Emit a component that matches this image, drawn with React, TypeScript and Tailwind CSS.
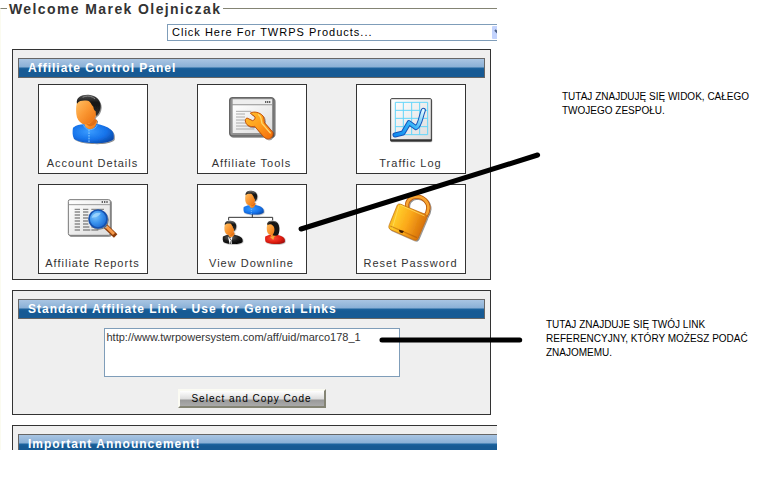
import React, { useState } from "react";

const Gradients = () => (
  <svg className="absolute h-0 w-0" aria-hidden="true">
    <defs>
      <linearGradient id="skin" x1="0" y1="0" x2="1" y2="1">
        <stop offset="0" stopColor="#ffc46a" />
        <stop offset="0.45" stopColor="#fb9a35" />
        <stop offset="1" stopColor="#e8690a" />
      </linearGradient>
      <linearGradient id="hair" x1="0" y1="0" x2="0" y2="1">
        <stop offset="0" stopColor="#555" />
        <stop offset="0.4" stopColor="#111" />
        <stop offset="1" stopColor="#333" />
      </linearGradient>
      <radialGradient id="shirtBlue" cx="0.4" cy="0.4" r="0.7">
        <stop offset="0" stopColor="#3a9cff" />
        <stop offset="0.6" stopColor="#1673ea" />
        <stop offset="1" stopColor="#0a48a8" />
      </radialGradient>
      <radialGradient id="shirtBlack" cx="0.4" cy="0.3" r="0.8">
        <stop offset="0" stopColor="#666" />
        <stop offset="0.5" stopColor="#1c1c1c" />
        <stop offset="1" stopColor="#000" />
      </radialGradient>
      <radialGradient id="shirtRed" cx="0.4" cy="0.4" r="0.7">
        <stop offset="0" stopColor="#ff4b35" />
        <stop offset="0.6" stopColor="#e01d12" />
        <stop offset="1" stopColor="#9c0d08" />
      </radialGradient>
      <linearGradient id="paper" x1="0" y1="0" x2="1" y2="1">
        <stop offset="0" stopColor="#fff" />
        <stop offset="1" stopColor="#dcdcdc" />
      </linearGradient>
      <linearGradient id="wrench" x1="0" y1="0" x2="1" y2="1">
        <stop offset="0" stopColor="#ffc02e" />
        <stop offset="0.5" stopColor="#ff9d1c" />
        <stop offset="1" stopColor="#f26a0c" />
      </linearGradient>
      <linearGradient id="chart" x1="0" y1="1" x2="1" y2="0">
        <stop offset="0" stopColor="#0f8cf0" />
        <stop offset="0.5" stopColor="#35b4f8" />
        <stop offset="1" stopColor="#e4fbff" />
      </linearGradient>
      <radialGradient id="lens" cx="0.35" cy="0.35" r="0.75">
        <stop offset="0" stopColor="#7cc4fb" />
        <stop offset="0.5" stopColor="#3a93ee" />
        <stop offset="1" stopColor="#1a63cc" />
      </radialGradient>
      <linearGradient id="gold" x1="0" y1="0" x2="1" y2="0.4">
        <stop offset="0" stopColor="#e8930c" />
        <stop offset="0.3" stopColor="#ffc928" />
        <stop offset="0.6" stopColor="#fba81a" />
        <stop offset="1" stopColor="#d8720a" />
      </linearGradient>
      <filter id="soft" x="-20%" y="-20%" width="150%" height="150%">
        <feDropShadow dx="3" dy="3" stdDeviation="2" floodOpacity="0.45" />
      </filter>
    </defs>
  </svg>
);

const Person = ({ shirt }: { shirt: string }) => (
  <g filter="url(#soft)">
    <path
      d="M129 143C139 136 149 133 161 133L200 131C215 134 232 139 243 149C252 157 252 166 251 177C238 190 208 190 183 189C160 188 143 184 132 177C127 166 127 154 129 143Z"
      fill={`url(#${shirt})`}
    />
    <path d="M163 132L181 118L201 120C200 132 197 145 181 149C170 147 164 140 163 132Z" fill="url(#skin)" />
    <path d="M164 130C176 136 184 130 193 115L201 120C198 130 190 139 178 139Z" fill="#d6600a" opacity="0.7" />
    <path
      d="M140 72C142 58 153 53 170 55C190 56 201 66 203 86C202 100 195 115 187 124C180 131 168 135 158 131C147 126 140 116 139 102C138 91 138 81 140 72Z"
      fill="url(#skin)"
    />
    <path
      d="M141 71C137 52 154 43 176 44C199 46 212 60 212 80C211 93 206 102 198 108L197 94C194 92 190 87 190 80C184 75 183 65 174 62C161 61 149 60 141 71Z"
      fill="url(#hair)"
    />
    <path d="M158 52C170 46 185 47 195 57" fill="none" stroke="#888" strokeWidth="3" />
  </g>
);

const AccountIcon = () => (
  <svg viewBox="99 15 180 210" width="60" height="70" aria-hidden="true">
    <Person shirt="shirtBlue" />
    <path d="M177 149V187" stroke="#8fd0ff" strokeWidth="3" strokeDasharray="5 3" />
    <path d="M160 134C164 145 172 149 181 149C192 148 199 143 202 134" fill="none" stroke="#5cb2ff" strokeWidth="3" />
  </svg>
);

const ToolsIcon = () => (
  <svg viewBox="96 15 180 210" width="60" height="70" aria-hidden="true">
    <g filter="url(#soft)">
      <rect x="119" y="53" width="133" height="115" rx="9" fill="#929292" stroke="#666" strokeWidth="4" />
      <path d="M128 58H246V73H128Z" fill="#eee" />
      <path d="M128 76H246V159H128Z" fill="url(#paper)" />
      <path d="M225 66H242" stroke="#333" strokeWidth="4" strokeDasharray="4 2" />
    </g>
    <path
      d="M138 94H184M138 102H165M138 111H165M138 120H168M138 129H181M138 138H187M138 147H193"
      stroke="#aaa"
      strokeWidth="3"
    />
    <path
      d="M181 99C192 93 210 97 219 108C224 116 221 122 224 129L247 155C251 162 248 170 241 175C233 179 224 174 219 168L194 139C182 142 170 137 167 127C164 121 167 115 171 114L188 122C194 120 196 115 195 111C192 106 185 105 181 99Z"
      fill="url(#wrench)"
      stroke="#c45208"
      strokeWidth="3"
      filter="url(#soft)"
    />
    <path d="M204 103C215 108 213 121 216 130L242 160" fill="none" stroke="#ffd66c" strokeWidth="4" />
  </svg>
);

const TrafficIcon = () => (
  <svg viewBox="105 15 180 210" width="60" height="70" aria-hidden="true">
    <rect x="134" y="58" width="125" height="129" rx="4" fill="#777" opacity="0.5" />
    <rect x="134" y="56" width="122" height="127" rx="3" fill="url(#paper)" stroke="#333" strokeWidth="3" />
    <path d="M133 181H257" stroke="#333" strokeWidth="6" />
    <path
      d="M148 67H245V164H148ZM172 67V164M197 67V164M221 67V164M148 91H245M148 115H245M148 140H245"
      fill="none"
      stroke="#63d5fa"
      strokeWidth="3"
    />
    <path
      d="M147 165L171 159L189 128L210 143C223 136 225 106 232 91"
      fill="none"
      stroke="#1554b8"
      strokeWidth="15"
      strokeLinecap="round"
      strokeLinejoin="round"
    />
    <path
      d="M147 165L171 159L189 128L210 143C223 136 225 106 232 91"
      fill="none"
      stroke="url(#chart)"
      strokeWidth="9"
      strokeLinecap="round"
      strokeLinejoin="round"
    />
  </svg>
);

const ReportsIcon = () => (
  <svg viewBox="99 15 180 210" width="60" height="70" aria-hidden="true">
    <g filter="url(#soft)">
      <rect x="115" y="59" width="126" height="107" rx="5" fill="url(#paper)" stroke="#777" strokeWidth="3" />
      <path d="M117 74H240" stroke="#999" strokeWidth="3" />
      <path d="M215 66H233" stroke="#333" strokeWidth="4" strokeDasharray="4 3" />
    </g>
    <path
      d="M134 88H150M134 96H150M134 105H150M134 114H150M134 123H150M134 132H150M134 141H150M134 150H150M159 88H175M159 96H175M159 105H175M159 114H175M159 123H175M159 132H175M159 141H178M159 150H181M184 88H222M184 141H200M184 150H205"
      stroke="#8a8a8a"
      strokeWidth="4"
    />
    <path d="M227 139L257 168" stroke="#8d3b08" strokeWidth="15" />
    <path d="M226 137L252 162" stroke="#f59a4b" strokeWidth="9" />
    <path d="M220 133L229 142" stroke="#bbb" strokeWidth="9" />
    <circle cx="204" cy="117" r="27" fill="url(#lens)" stroke="#1751ae" strokeWidth="5" filter="url(#soft)" />
    <path d="M185 113C188 102 200 96 212 99C209 108 197 113 185 113Z" fill="#a4dafe" opacity="0.8" />
  </svg>
);

const DownlineIcon = () => (
  <svg viewBox="96 15 180 210" width="60" height="70" className="overflow-visible" aria-hidden="true">
    <path d="M116 121V112H248V121M187 102V113" fill="none" stroke="#333" strokeWidth="3" />
    <g transform="translate(98 11) scale(.49)">
      <Person shirt="shirtBlue" />
    </g>
    <path d="M184 87V103" stroke="#8fd0ff" strokeWidth="2" strokeDasharray="3 3" />
    <g transform="translate(37 101) scale(.48)">
      <Person shirt="shirtBlack" />
    </g>
    <path d="M114 170L120 176L127 169L125 192L119 193Z" fill="#fff" />
    <path d="M120 176L124 181L121 192" fill="none" stroke="#555" strokeWidth="3" />
    <g transform="translate(164 101) scale(.48)">
      <Person shirt="shirtRed" />
    </g>
    <path
      d="M233 136C236 124 252 122 262 130C270 139 270 154 265 164C260 168 252 168 248 165C255 155 255 143 249 137C244 132 238 131 233 136Z"
      fill="#161616"
    />
    <path d="M239 170L250 180L253 169Z" fill="#f7a83d" />
  </svg>
);

const LockIcon = () => (
  <svg viewBox="105 15 180 210" width="60" height="70" aria-hidden="true">
    <g filter="url(#soft)">
      <path
        d="M184 86C179 64 192 51 211 50C233 50 248 67 247 85C246 94 243 102 239 107"
        fill="none"
        stroke="#b7560a"
        strokeWidth="13"
      />
      <path
        d="M184 86C179 64 192 51 211 50C233 50 248 67 247 85C246 94 243 102 239 107"
        fill="none"
        stroke="#f8a530"
        strokeWidth="8"
      />
      <path
        d="M154 75C157 70 166 72 174 77L238 103C244 107 243 112 241 117L216 176C212 183 206 181 199 178L138 151C128 147 127 142 130 134Z"
        fill="url(#gold)"
        stroke="#b8650a"
        strokeWidth="2"
      />
    </g>
    <path d="M159 76L139 145M162 75L236 108" fill="none" stroke="#ffe066" strokeWidth="3" opacity="0.7" />
    <path d="M133 138L213 173" stroke="#a65306" strokeWidth="4" opacity="0.5" />
    <path d="M159 149L174 153L169 160L161 157Z" fill="#3d1c02" />
  </svg>
);

const menu = [
  { label: "Account Details", icon: <AccountIcon /> },
  { label: "Affiliate Tools", icon: <ToolsIcon /> },
  { label: "Traffic Log", icon: <TrafficIcon /> },
  { label: "Affiliate Reports", icon: <ReportsIcon /> },
  { label: "View Downline", icon: <DownlineIcon /> },
  { label: "Reset Password", icon: <LockIcon /> },
];

interface PanelProps {
  title: string;
  className?: string;
  children?: React.ReactNode;
}

const Panel: React.FC<PanelProps> = ({ title, className = "mr-[6px]", children }) => {
  return (
    <section className={`border border-[#333] bg-[#efefef] pt-2 ${className}`}>
      <h2 className="mx-[5px] h-5 border border-[#666] bg-[linear-gradient(#a9c5e3,#8ab0d6_8px,#1d649f_9px,#175a94_11px,#175a94)] pl-[9px] text-[12px] leading-[19px] font-bold text-white">
        {title}
      </h2>
      {children}
    </section>
  );
};

const ControlPanel = () => {
  const [code, setCode] = useState("http://www.twrpowersystem.com/aff/uid/marco178_1");

  return (
    <div className="h-[450px] overflow-hidden tracking-[1px]">
      <fieldset className="min-w-0 border-t border-l border-t-[#848474] border-l-[#fbfbf0] pl-[11px]">
        <legend className="-ml-[5px] px-[2px] pt-[2px] text-[14px] leading-[15px] font-bold tracking-widest">
          Welcome Marek Olejniczak
        </legend>
        <div className="-mr-3 flex justify-end pt-[7px]">
          <div className="relative w-[342px]">
            <select
              aria-label="Products"
              className="block h-[17px] w-full appearance-none border border-[#7f9db9] bg-white pl-1 text-[11px] leading-[15px] text-black"
            >
              <option>Click Here For TWRPS Products...</option>
            </select>
            <svg
              viewBox="0 0 15 13"
              className="pointer-events-none absolute top-[2px] right-[2px] h-[13px] w-[15px]"
              aria-hidden="true"
            >
              <rect width="15" height="13" rx="1" fill="#c3d3fd" />
              <path d="M3 4L7 8L11 4" fill="none" stroke="#4d6185" strokeWidth="2" />
            </svg>
          </div>
        </div>

        <div className="flex flex-col gap-[10px] pt-2">
          <Panel title="Affiliate Control Panel">
            <nav className="grid grid-cols-3 justify-items-center gap-y-[10px] pt-[6px] pb-[5px]">
              {menu.map(({ label, icon }) => (
                <a
                  key={label}
                  href="#"
                  className="flex h-[90px] w-[110px] flex-col items-center border border-[#333] bg-white text-[11px] leading-4 whitespace-nowrap"
                >
                  {icon}
                  {label}
                </a>
              ))}
            </nav>
          </Panel>

          <Panel title="Standard Affiliate Link - Use for General Links">
            <div className="flex flex-col items-center pt-[9px] pb-[6px]">
              <textarea
                aria-label="Affiliate link"
                className="h-[49px] w-[296px] resize-none overflow-hidden border border-[#7f9db9] bg-white px-[2px] py-[1px] text-[11px] leading-[14px] tracking-normal"
                value={code}
                onChange={(e) => setCode(e.target.value)}
              />
              <button
                type="button"
                className="mt-3 h-[19px] w-[148px] border-2 border-t-[#fbfbf3] border-r-[#848474] border-b-[#848474] border-l-[#fbfbf3] bg-[linear-gradient(#fff,#ddd_8px,#999_9px,#aaa)] text-[10px] leading-[14px] text-black"
              >
                Select and Copy Code
              </button>
            </div>
          </Panel>

          <Panel title="Important Announcement!" className="-mr-3 h-[60px]" />
        </div>
      </fieldset>
    </div>
  );
};

const App: React.FC = () => {
  return (
    <main className="relative grid min-h-[493px] grid-cols-[497fr_281fr] bg-white font-['Liberation_Sans',Arial,sans-serif] text-[#333]">
      <Gradients />
      <ControlPanel />
      <aside className="pt-[90px] text-[10px] leading-[14px] text-black">
        <p className="ml-[65px] max-w-[210px]">TUTAJ ZNAJDUJĘ SIĘ WIDOK, CAŁEGO TWOJEGO ZESPOŁU.</p>
        <p className="mt-[200px] ml-[49px] max-w-[215px]">
          TUTAJ ZNAJDUJE SIĘ TWÓJ LINK REFERENCYJNY, KTÓRY MOŻESZ PODAĆ ZNAJOMEMU.
        </p>
      </aside>
      <svg className="pointer-events-none absolute inset-0 h-full w-full" aria-hidden="true">
        <g stroke="#000" strokeWidth="5" strokeLinecap="round">
          <line x1="38.7%" y1="229" x2="69.1%" y2="155" />
          <line x1="49.1%" y1="340" x2="66.8%" y2="340" />
        </g>
      </svg>
    </main>
  );
};

export default App;
